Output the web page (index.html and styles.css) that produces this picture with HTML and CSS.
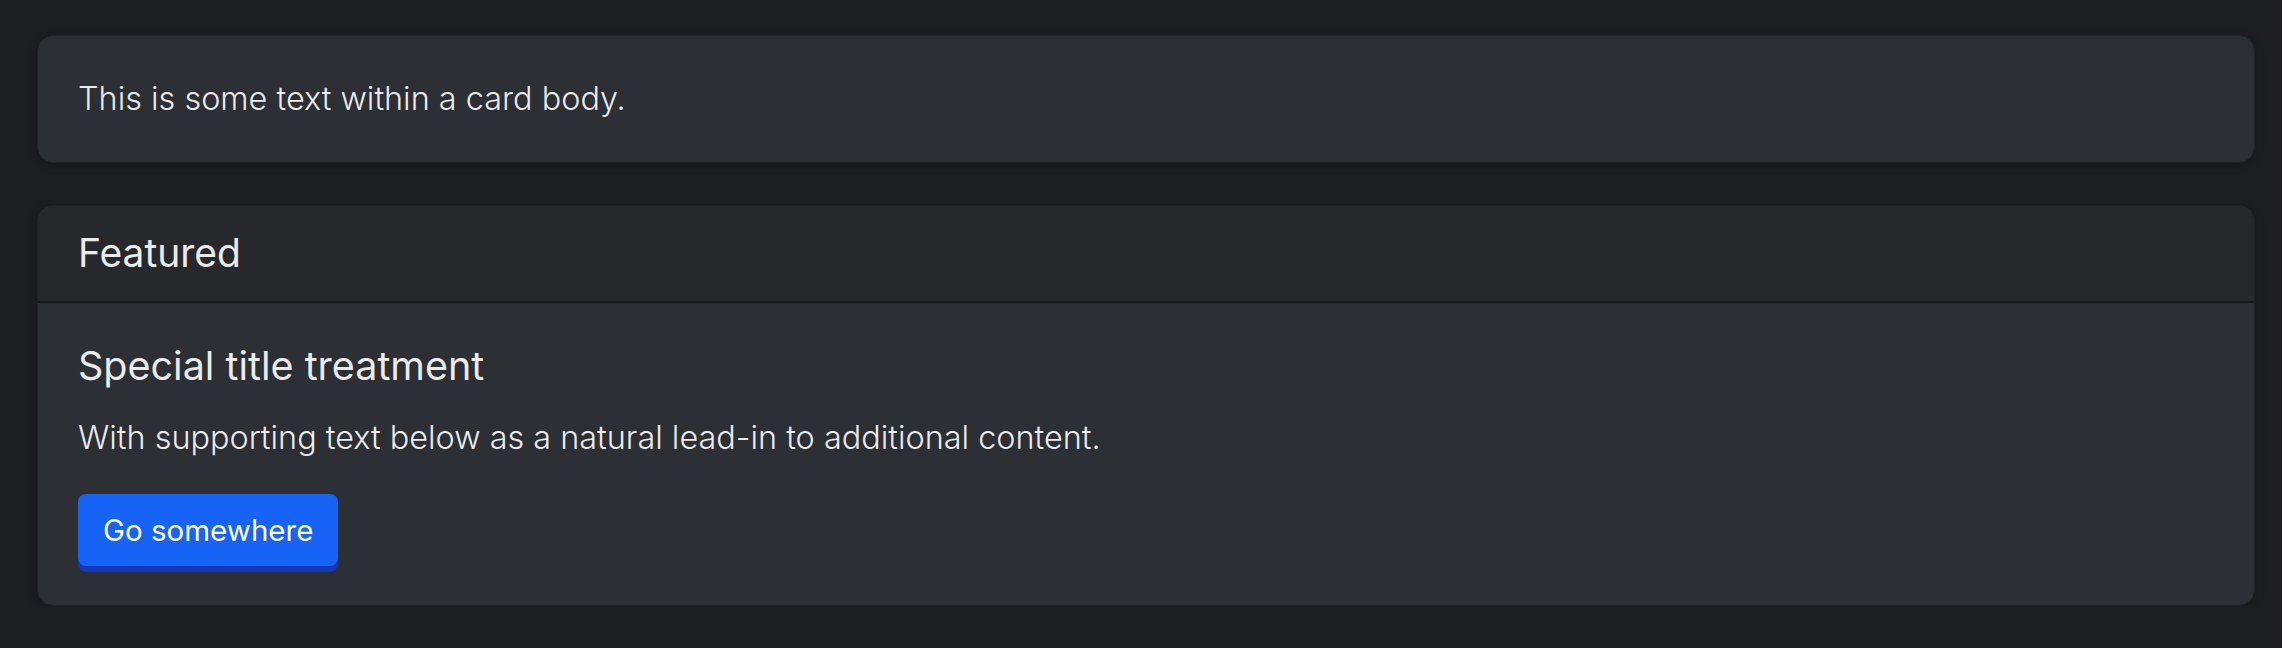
FILE: index.html
```html
<!DOCTYPE html>
<html lang="en">
<head>
<meta charset="utf-8">
<title>Cards</title>
<link rel="stylesheet" href="styles.css">
</head>
<body>
<main class="page">
  <div class="card">
    <div class="card-body">
      <p class="card-text">This is some text within a card body.</p>
    </div>
  </div>
  <div class="card">
    <div class="card-header">Featured</div>
    <div class="card-body">
      <h5 class="card-title">Special title treatment</h5>
      <p class="card-text spaced">With supporting text below as a natural lead-in to additional content.</p>
      <a href="#" class="btn">Go somewhere</a>
    </div>
  </div>
</main>
</body>
</html>
```
FILE: styles.css
```css
html, body {
  margin: 0;
  padding: 0;
  background: #1c1e21;
}
body {
  font-family: "Inter", "Noto Sans", sans-serif;
  color: #ebebec;
}
.page {
  display: flex;
  flex-direction: column;
  gap: 42px;
  padding: 35px 27px 0 37px;
}
.card {
  background: #2c2f34;
  border: 1px solid #202226;
  border-radius: 16px;
  box-shadow: 0 2px 10px rgba(0, 0, 0, 0.28);
  overflow: hidden;
}
.card-header {
  background: #27282c;
  border-bottom: 2px solid #17181a;
  padding: 23px 40px 24px;
  font-size: 39px;
  line-height: 48px;
  font-weight: 400;
}
.card-body {
  padding: 39px 40px;
  display: flex;
  flex-direction: column;
  align-items: flex-start;
}
.card-title {
  margin: 0 0 24px;
  font-size: 39.5px;
  line-height: 48px;
  font-weight: 400;
}
.card-text {
  margin: 0;
  font-size: 32.4px;
  line-height: 48px;
  font-weight: 300;
}
.card-text.spaced {
  margin-bottom: 32px;
}
.btn {
  display: inline-block;
  height: 72px;
  line-height: 72px;
  padding: 0 25px;
  background: #1663f5;
  color: #ffffff;
  font-size: 29.5px;
  text-decoration: none;
  border-radius: 8px;
  box-shadow: 0 6px 0 #1537b4;
}
```
